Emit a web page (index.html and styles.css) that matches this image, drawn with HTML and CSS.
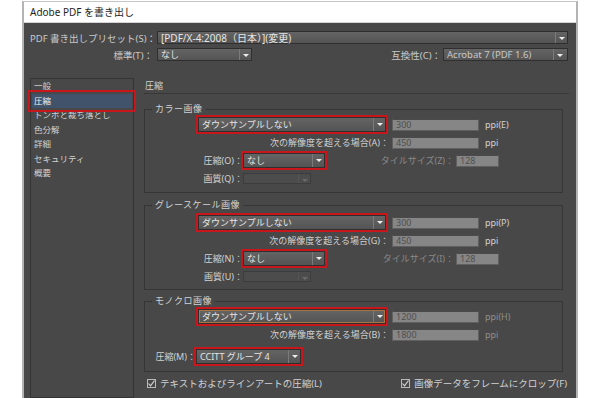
FILE: index.html
```html
<!DOCTYPE html>
<html lang="ja">
<head>
    <meta charset="UTF-8">
    <title>Adobe PDF を書き出し</title>
    <link rel="stylesheet" href="styles.css">
</head>
<body>

    <div class="dialog">
        <div class="titlebar">Adobe PDF を書き出し</div>

        <div class="content">
            <div class="preset-row">
                <span class="main-label">PDF 書き出しプリセット(S)：</span>
                <div class="dd dd-preset"><span class="dd-text">[PDF/X-4:2008（日本）](変更)</span><span class="dd-arrow"></span></div>
            </div>

            <div class="preset-row">
                <span class="main-label">標準(T)：</span>
                <div class="dd dd-std"><span class="dd-text">なし</span><span class="dd-arrow"></span></div>
                <div class="compat">
                    <span>互換性(C)：</span>
                    <div class="dd dd-compat"><span class="dd-text">Acrobat 7 (PDF 1.6)</span><span class="dd-arrow"></span></div>
                </div>
            </div>

            <div class="main">
                <ul class="nav">
                    <li>一般</li>
                    <li class="active">圧縮</li>
                    <li>トンボと裁ち落とし</li>
                    <li>色分解</li>
                    <li>詳細</li>
                    <li>セキュリティ</li>
                    <li>概要</li>
                </ul>

                <div class="panel">
                    <div class="panel-title">圧縮</div>

                    <!-- カラー画像 -->
                    <fieldset class="group group-color">
                        <legend>カラー画像</legend>
                        <div class="row row-sample">
                            <div class="dd dd-sample hl"><span class="dd-text">ダウンサンプルしない</span><span class="dd-arrow"></span></div>
                            <span class="field field-wide">300</span>
                            <span class="unit">ppi(E)</span>
                        </div>
                        <div class="row">
                            <span class="res-label">次の解像度を超える場合(A)：</span>
                            <span class="field field-wide">450</span>
                            <span class="unit">ppi</span>
                        </div>
                        <div class="row">
                            <span class="cmp-label">圧縮(O)：</span>
                            <div class="dd dd-cmp hl"><span class="dd-text">なし</span><span class="dd-arrow"></span></div>
                            <span class="tile-label">タイルサイズ(Z)：</span>
                            <span class="field field-tile">128</span>
                        </div>
                        <div class="row">
                            <span class="cmp-label">画質(Q)：</span>
                            <div class="dd dd-quality disabled"><span class="dd-text"></span><span class="dd-arrow"></span></div>
                        </div>
                    </fieldset>

                    <!-- グレースケール画像 -->
                    <fieldset class="group group-gray">
                        <legend>グレースケール画像</legend>
                        <div class="row row-sample">
                            <div class="dd dd-sample hl"><span class="dd-text">ダウンサンプルしない</span><span class="dd-arrow"></span></div>
                            <span class="field field-wide">300</span>
                            <span class="unit">ppi(P)</span>
                        </div>
                        <div class="row">
                            <span class="res-label">次の解像度を超える場合(G)：</span>
                            <span class="field field-wide">450</span>
                            <span class="unit">ppi</span>
                        </div>
                        <div class="row">
                            <span class="cmp-label">圧縮(N)：</span>
                            <div class="dd dd-cmp hl"><span class="dd-text">なし</span><span class="dd-arrow"></span></div>
                            <span class="tile-label">タイルサイズ(I)：</span>
                            <span class="field field-tile">128</span>
                        </div>
                        <div class="row">
                            <span class="cmp-label">画質(U)：</span>
                            <div class="dd dd-quality disabled"><span class="dd-text"></span><span class="dd-arrow"></span></div>
                        </div>
                    </fieldset>

                    <!-- モノクロ画像 -->
                    <fieldset class="group group-mono">
                        <legend>モノクロ画像</legend>
                        <div class="row row-sample">
                            <div class="dd dd-sample hl focus"><span class="dd-text">ダウンサンプルしない</span><span class="dd-arrow"></span></div>
                            <span class="field field-wide">1200</span>
                            <span class="unit dim">ppi(H)</span>
                        </div>
                        <div class="row">
                            <span class="res-label">次の解像度を超える場合(B)：</span>
                            <span class="field field-wide">1800</span>
                            <span class="unit dim">ppi</span>
                        </div>
                        <div class="row row-mono-cmp">
                            <span class="mono-label">圧縮(M)：</span>
                            <div class="dd dd-ccitt hl"><span class="dd-text">CCITT グループ 4</span><span class="dd-arrow"></span></div>
                        </div>
                    </fieldset>

                    <div class="checks">
                        <span class="check"><span class="box"><svg width="9" height="9" viewBox="0 0 9 9"><path d="M1.5 4.5 L3.5 6.8 L7.5 1.5" fill="none" stroke="#d8d8d8" stroke-width="1.1"/></svg></span>テキストおよびラインアートの圧縮(L)</span>
                        <span class="check"><span class="box"><svg width="9" height="9" viewBox="0 0 9 9"><path d="M1.5 4.5 L3.5 6.8 L7.5 1.5" fill="none" stroke="#d8d8d8" stroke-width="1.1"/></svg></span>画像データをフレームにクロップ(F)</span>
                    </div>
                </div>
            </div>
        </div>
    </div>

</body>
</html>
```

FILE: styles.css
```css
body {
    margin: 0;
    background-color: #fff;
    font-family: "Noto Sans", "Noto Sans CJK JP", sans-serif;
    font-size: 9px;
}

.dialog {
    margin: 1px 0 0 22px;
    width: 556px;
    height: 397px;
    box-sizing: border-box;
    border-top: 1px solid #c6c6c6;
    border-left: 2px solid #b4b4b4;
    border-right: 2px solid #b4b4b4;
    display: flex;
    flex-direction: column;
}

.titlebar {
    height: 20px;
    line-height: 20px;
    padding-left: 6px;
    background-color: #fff;
    color: #1e1e1e;
    font-size: 10px;
    border-bottom: 1px solid #d4d4d4;
}

.content {
    flex: 1;
    background-color: #484848;
    color: #d2d2d2;
    padding: 8px 8px 0 6px;
    display: flex;
    flex-direction: column;
}

/* top preset rows */
.preset-row {
    display: flex;
    align-items: center;
    height: 13px;
    margin-bottom: 4px;
}

.main-label {
    width: 127px;
    box-sizing: border-box;
    padding-right: 4px;
    text-align: right;
    white-space: nowrap;
    font-size: 9.5px;
    color: #c8c8c8;
}

.compat {
    margin-left: auto;
    display: flex;
    align-items: center;
}

.compat span {
    margin-right: 2px;
    font-size: 9.5px;
    color: #c8c8c8;
}

/* dropdowns */
.dd {
    display: flex;
    align-items: center;
    box-sizing: border-box;
    height: 15px;
    border: 1px solid #2f2f2f;
    background: linear-gradient(#646464, #545454);
    color: #e6e6e6;
}

.dd-text {
    flex: 1;
    padding-left: 3px;
    white-space: nowrap;
    overflow: hidden;
}

.dd-arrow {
    width: 11px;
    height: 100%;
    border-left: 1px solid #7a7a7a;
    position: relative;
}

.dd-arrow::after {
    content: "";
    position: absolute;
    left: 3px;
    top: 5px;
    border-left: 3px solid transparent;
    border-right: 3px solid transparent;
    border-top: 3px solid #eee;
}

.dd-preset {
    flex: 1;
    height: 13px;
    font-size: 10px;
}

.dd-std {
    width: 95px;
    height: 13px;
}

.dd-compat {
    width: 125px;
    height: 13px;
    font-size: 10px;
}

.dd.disabled {
    background: #4c4c4c;
    border-color: #3c3c3c;
}

.dd.disabled .dd-arrow {
    border-left-color: #555;
}

.dd.disabled .dd-arrow::after {
    border-top-color: #6a6a6a;
}

.hl {
    outline: 2px solid #c8161d;
}

.focus {
    box-shadow: inset 0 0 0 1px #a87440;
}

/* main area */
.main {
    flex: 1;
    display: flex;
    margin-top: 13px;
}

.nav {
    width: 104px;
    flex-shrink: 0;
    box-sizing: border-box;
    margin: 0;
    padding: 0 1px;
    list-style: none;
    border: 1px solid #343434;
    font-size: 8.5px;
}

.nav li {
    line-height: 14.5px;
    padding-left: 2px;
    white-space: nowrap;
}

.nav li.active {
    background-color: #40536b;
    color: #eee;
    outline: 2px solid #c8161d;
    outline-offset: 2px;
}

.panel {
    width: 425px;
    flex-shrink: 0;
    margin-left: 10px;
}

.panel-title {
    height: 15px;
    line-height: 15px;
    padding-left: 1px;
    border-bottom: 1px solid #383838;
}

/* groups */
.group {
    margin: 9px 6px 0 0;
    padding: 2px 0 6px 0;
    border: 1px solid #363636;
    min-width: 0;
}

.group legend {
    margin-left: 7px;
    padding: 0 3px;
    line-height: 12px;
    letter-spacing: 0.5px;
}

.group-gray {
    margin-top: 6px;
    padding-top: 4px;
    padding-bottom: 5px;
}

.group-mono {
    margin-top: 5px;
    padding-top: 2px;
    padding-bottom: 7px;
}

.row {
    display: flex;
    align-items: center;
    height: 15px;
    margin-top: 3px;
}

.row:first-of-type {
    margin-top: 0;
}

.row-sample .dd-sample {
    margin-left: 53px;
    width: 188px;
}

.field {
    box-sizing: border-box;
    height: 12px;
    line-height: 10px;
    padding-left: 3px;
    background-color: #868686;
    border: 1px solid #606060;
    border-top-color: #4a4a4a;
    color: #505050;
}

.field-wide {
    width: 87px;
    margin-left: 6px;
}

.row .res-label + .field-wide {
    margin-left: 3px;
}

.field-tile {
    width: 43px;
    margin-left: 2px;
}

.unit {
    margin-left: 6px;
}

.unit.dim {
    color: #8e8e8e;
}

.res-label {
    width: 244px;
    text-align: right;
    white-space: nowrap;
}

.cmp-label {
    width: 98px;
    text-align: right;
    white-space: nowrap;
}

.dd-cmp {
    width: 82px;
}

.tile-label {
    width: 129px;
    text-align: right;
    white-space: nowrap;
    color: #8a8a8a;
}

.dd-quality {
    width: 68px;
    height: 11px;
}

.row-mono-cmp {
    margin-top: 7px;
}

.mono-label {
    width: 51px;
    text-align: right;
    white-space: nowrap;
}

.dd-ccitt {
    width: 105px;
}

/* checkboxes */
.checks {
    display: flex;
    justify-content: space-between;
    align-items: center;
    margin-top: 5px;
    padding: 0 2px 0 3px;
    height: 12px;
}

.check {
    display: flex;
    align-items: center;
    font-size: 9.5px;
}

.box {
    display: inline-block;
    width: 9px;
    height: 9px;
    box-sizing: border-box;
    border: 1px solid #b8b8b8;
    margin-right: 4px;
    line-height: 0;
}

.box svg {
    margin: -1px 0 0 -1px;
}
```
